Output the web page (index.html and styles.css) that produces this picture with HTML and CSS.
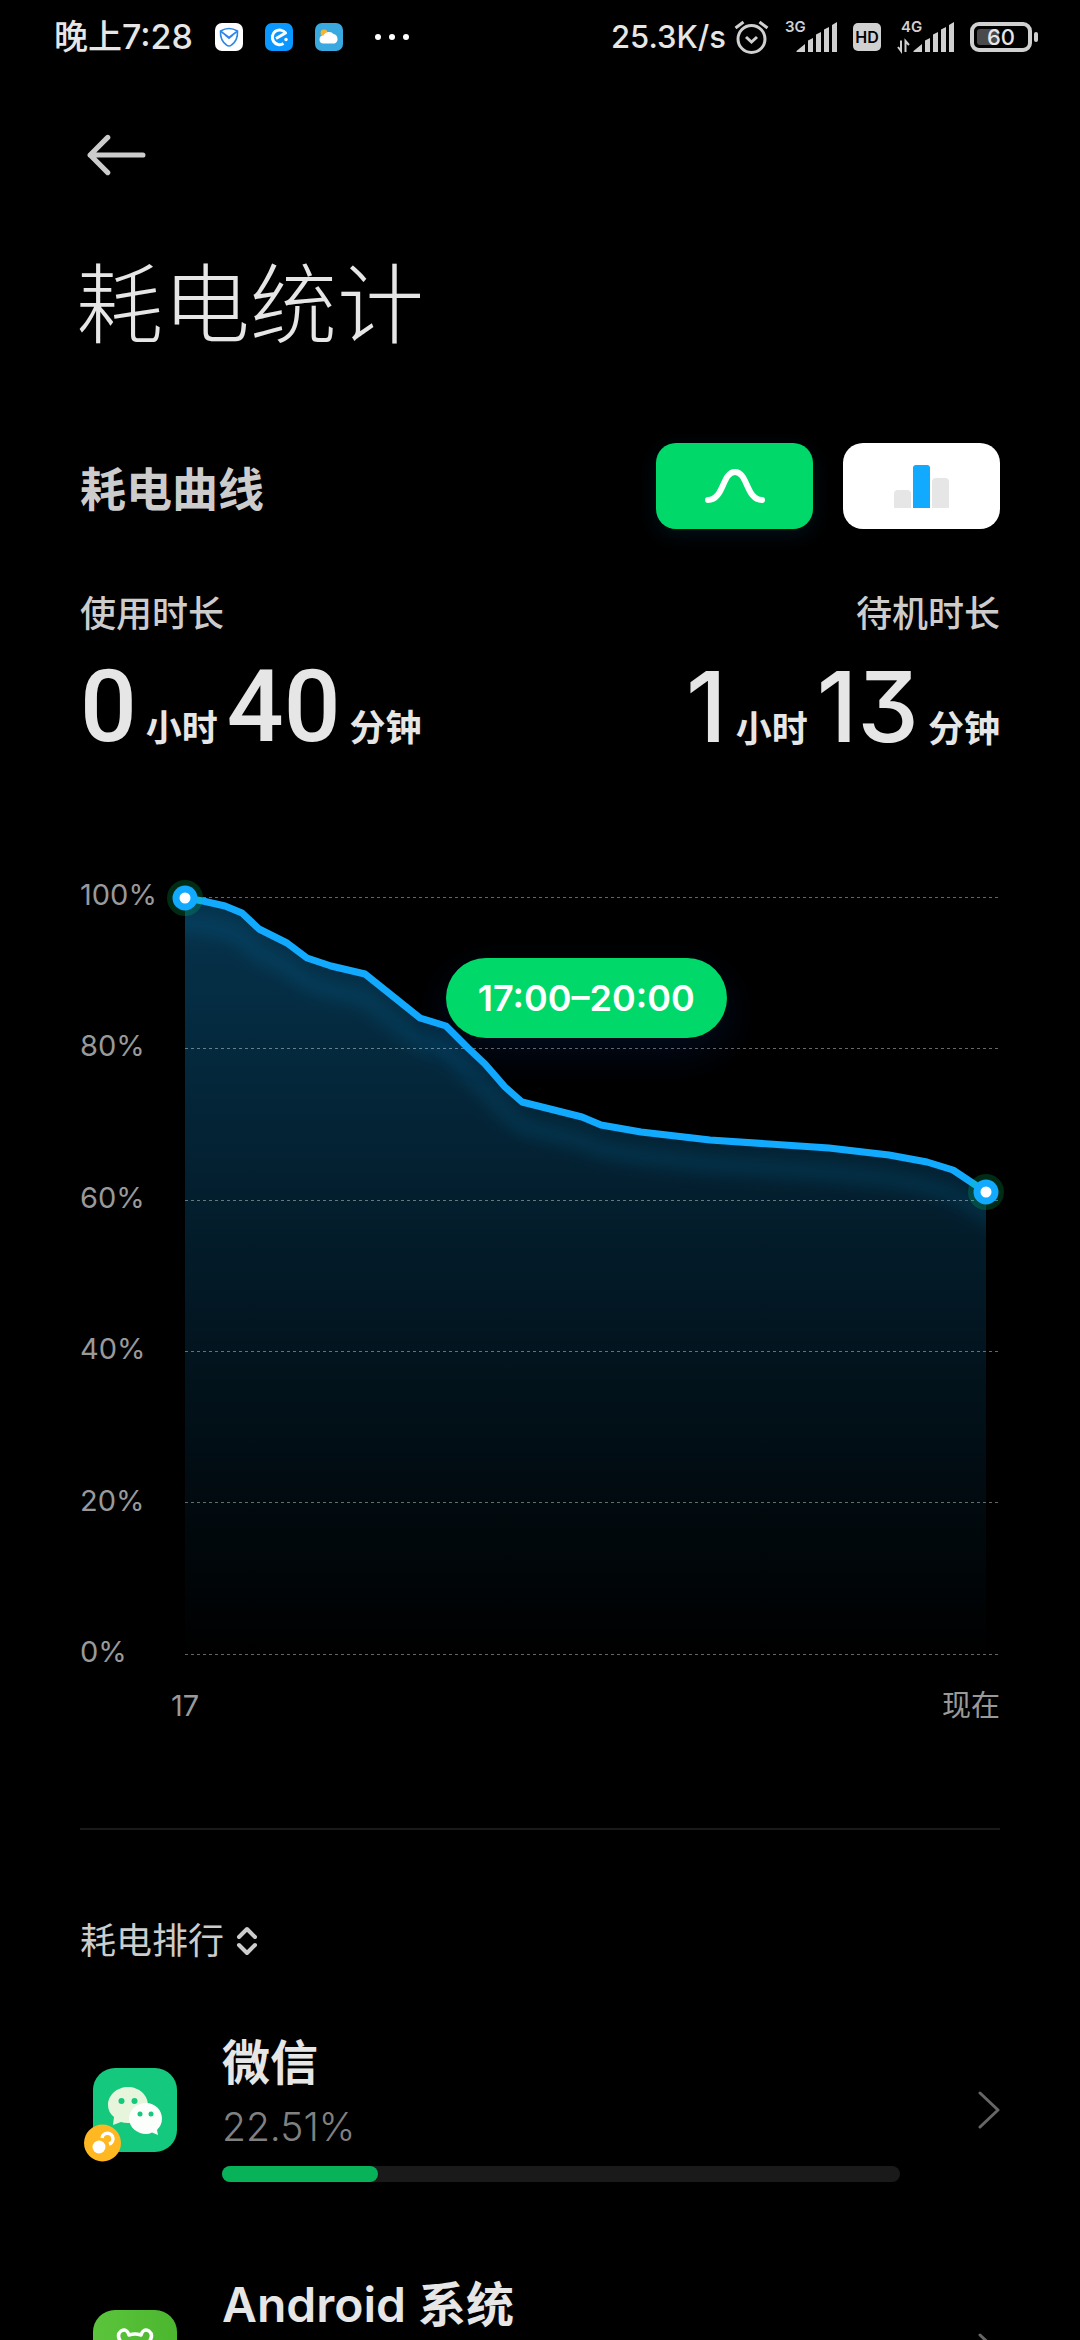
FILE: index.html
```html
<!DOCTYPE html>
<html lang="zh-CN">
<head>
    <meta charset="UTF-8">
    <meta name="viewport" content="width=device-width, initial-scale=1.0">
    <title>耗电统计</title>
    <link rel="stylesheet" href="styles.css">
</head>
<body>

<div class="statusBar">
    <div class="statusLeft">
        <span class="clock">晚上7:28</span>
        <svg class="appIcon" viewBox="0 0 28 28">
            <rect width="28" height="28" rx="7" fill="#fff"/>
            <path d="M5.500 8Q14 3 22.500 8Q23 17.500 16.500 22Q14 24 11.500 22Q5 17.500 5.500 8Z" fill="none" stroke="#2f86e8" stroke-width="1.600" stroke-linejoin="round"/>
            <path d="M6 8.500L14 14.500L22 8.500M10 11.800L14 15.200L18 11.800" fill="none" stroke="#2f86e8" stroke-width="1.600"/>
        </svg>
        <svg class="appIcon" viewBox="0 0 28 28">
            <rect width="28" height="28" rx="7" fill="#0a97ff"/>
            <path d="M11 15.500L20.500 10A7.300 7.300 0 1 0 18.500 20.500" fill="none" stroke="#fff" stroke-width="3" stroke-linejoin="round"/>
            <circle cx="21" cy="16.500" r="1.700" fill="#fff"/>
        </svg>
        <svg class="appIcon" viewBox="0 0 28 28">
            <rect width="28" height="28" rx="7" fill="#39a9e0"/>
            <circle cx="9" cy="10" r="3.400" fill="#f7b62c"/>
            <path d="M8.500 20.500A4 4 0 0 1 8.500 12.500A6 6 0 0 1 18.500 11A5 5 0 0 1 19.500 20.500Z" fill="#fff"/>
        </svg>
        <svg class="moreDots" viewBox="0 0 34 6">
            <circle cx="3" cy="3" r="3"/>
            <circle cx="17" cy="3" r="3"/>
            <circle cx="31" cy="3" r="3"/>
        </svg>
    </div>
    <div class="statusRight">
        <span class="speed">25.3K/s</span>
        <svg class="alarm" viewBox="0 0 35 35">
            <g fill="none" stroke="#d0d0d0" stroke-width="3">
                <circle cx="17.500" cy="19" r="13.500"/>
                <path d="M1.500 8L9.500 2M25.500 2L33.500 8"/>
                <path d="M12 17L17.500 22L23 17"/>
            </g>
        </svg>
        <svg class="signal" viewBox="0 0 52 32">
            <text x="0" y="11">3G</text>
            <path d="M11.500 31V30L20 23V31ZM23 31V19.500L28 17V31ZM31 31V13.500L36 11V31ZM39 31V8.500L44 6V31ZM47 31V4L52 1V31Z"/>
        </svg>
        <svg class="hd" viewBox="0 0 28 28">
            <rect width="28" height="28" rx="5" fill="#d0d0d0"/>
            <text x="14" y="20" text-anchor="middle">HD</text>
        </svg>
        <svg class="signal signalWide" viewBox="0 0 57 32">
            <text x="4" y="11">4G</text>
            <path d="M16.500 31V30L25 23V31ZM28 31V19.500L33 17V31ZM36 31V13.500L41 11V31ZM44 31V8.500L49 6V31ZM52 31V4L57 1V31Z"/>
            <path d="M1 26L4 30V19.500M8.500 31V20L12 24" fill="none" stroke="#d0d0d0" stroke-width="2"/>
        </svg>
        <svg class="battery" viewBox="0 0 68 30">
            <rect x="7" y="7" width="22" height="16" rx="3" fill="#4a4a4a"/>
            <rect x="2" y="2" width="58" height="26" rx="7" fill="none" stroke="#d0d0d0" stroke-width="4"/>
            <rect x="64" y="10" width="4" height="10" rx="2" fill="#d0d0d0"/>
            <text x="31" y="23" text-anchor="middle">60</text>
        </svg>
    </div>
</div>

<main class="page">
    <button class="backBtn" aria-label="返回">
        <svg viewBox="0 0 58 40">
            <path d="M21 3L4 20L21 37M4 20H55" fill="none" stroke="#ccc" stroke-width="5" stroke-linecap="round" stroke-linejoin="round"/>
        </svg>
    </button>
    <h1 class="title">耗电统计</h1>

    <div class="curveHeader">
        <h2 class="curveTitle">耗电曲线</h2>
        <div class="toggles">
            <button class="toggle toggleActive" aria-label="曲线">
                <svg viewBox="0 0 60 44">
                    <path d="M3 36C19 36 17 8 30 8S41 36 57 36" fill="none" stroke="#fff" stroke-width="6" stroke-linecap="round"/>
                </svg>
            </button>
            <button class="toggle" aria-label="柱状图">
                <svg viewBox="0 0 60 44">
                    <path d="M2 44V30Q2 26 6 26H15Q19 26 19 30V44ZM40 44V18Q40 14 44 14H53Q57 14 57 18V44Z" fill="#e6e6e6"/>
                    <path d="M21 44V4Q21 1 24 1H35Q38 1 38 4V44Z" fill="#12aaff"/>
                </svg>
            </button>
        </div>
    </div>

    <div class="durations">
        <div class="duration">
            <div class="durationLabel">使用时长</div>
            <div class="durationValue"><b>0</b><span>小时</span><b>40</b><span>分钟</span></div>
        </div>
        <div class="duration durationRight">
            <div class="durationLabel">待机时长</div>
            <div class="durationValue"><b>1</b><span>小时</span><b>13</b><span>分钟</span></div>
        </div>
    </div>

    <div class="chart">
        <div class="yAxis">
            <span>100%</span>
            <span>80%</span>
            <span>60%</span>
            <span>40%</span>
            <span>20%</span>
            <span>0%</span>
        </div>
        <div class="plot">
            <svg class="plotSvg" viewBox="0 0 815 757">
                <defs>
                    <linearGradient id="areaFill" x1="0" y1="0" x2="0" y2="1">
                        <stop offset="0" stop-color="#12aaff" stop-opacity="0.3"/>
                        <stop offset="1" stop-color="#12aaff" stop-opacity="0"/>
                    </linearGradient>
                    <filter id="soft" x="-10%" y="-30%" width="120%" height="160%">
                        <feGaussianBlur stdDeviation="8"/>
                    </filter>
                    <clipPath id="areaClip">
                        <path d="M0 1L18 4L40 9L57 16L74 32L102 46L122 61L146 69L180 77L200 93L235 121L261 129L283 151L300 167L320 190L337 205L397 220L416 228L456 235L525 243L644 251L704 258L742 265L768 273L801 295V757H0Z"/>
                    </clipPath>
                </defs>
                <path d="M0 1L18 4L40 9L57 16L74 32L102 46L122 61L146 69L180 77L200 93L235 121L261 129L283 151L300 167L320 190L337 205L397 220L416 228L456 235L525 243L644 251L704 258L742 265L768 273L801 295V757H0Z" fill="url(#areaFill)"/>
                <g clip-path="url(#areaClip)">
                    <path class="lineShadow" filter="url(#soft)" d="M-20 25L18 28L40 33L57 40L74 56L102 70L122 85L146 93L180 101L200 117L235 145L261 153L283 175L300 191L320 214L337 229L397 244L416 252L456 259L525 267L644 275L704 282L742 289L768 297L821 329"/>
                </g>
                <path class="gridLines" d="M0 0.500H815M0 151.500H815M0 303.500H815M0 454.500H815M0 605.500H815M0 757.500H815"/>
                <path class="line" d="M0 1L18 4L40 9L57 16L74 32L102 46L122 61L146 69L180 77L200 93L235 121L261 129L283 151L300 167L320 190L337 205L397 220L416 228L456 235L525 243L644 251L704 258L742 265L768 273L801 295"/>
                <circle cx="0" cy="1" r="18" fill="#00d96a" fill-opacity="0.2"/>
                <circle cx="0" cy="1" r="12.500" fill="#12aaff"/>
                <circle cx="0" cy="1" r="5.500" fill="#fff"/>
                <circle cx="801" cy="295" r="18" fill="#00d96a" fill-opacity="0.2"/>
                <circle cx="801" cy="295" r="12.500" fill="#12aaff"/>
                <circle cx="801" cy="295" r="5.500" fill="#fff"/>
            </svg>
            <div class="tooltip">17:00–20:00</div>
        </div>
    </div>
    <div class="xAxis">
        <span>17</span>
        <span>现在</span>
    </div>

    <button class="sortBtn">
        耗电排行
        <svg viewBox="0 0 22 30">
            <path d="M3 11L11 3L19 11M3 19L11 27L19 19" fill="none" stroke="#ccc" stroke-width="4" stroke-linecap="round" stroke-linejoin="round"/>
        </svg>
    </button>

    <div class="appList">
        <a class="appRow" href="#wechat">
            <svg class="rowIcon" viewBox="0 0 104 104">
                <rect x="13" y="10" width="84" height="84" rx="22" fill="#14c87e"/>
                <path d="M48 29C37 29 28 37 28 47C28 52 30 56 34 59L33 67L41 64Q44 65 48 65C59 65 68 57 68 47S59 29 48 29Z" fill="#e6f5dc"/>
                <circle cx="41.500" cy="43" r="3" fill="#14c87e"/>
                <circle cx="54.500" cy="43" r="3" fill="#14c87e"/>
                <path d="M66 45C57 45 49 52 49 60.500S57 76 66 76Q69 76 72 74.500L78 77L77 72Q82 67 82 60.500C82 52 75 45 66 45Z" fill="#fbfefa"/>
                <circle cx="60" cy="56" r="2.500" fill="#14c87e"/>
                <circle cx="71" cy="56" r="2.500" fill="#14c87e"/>
                <circle cx="22.500" cy="85" r="18.500" fill="#ffb821"/>
                <circle cx="19" cy="89" r="6.500" fill="#fff"/>
                <path d="M22 80A5.500 5.500 0 1 1 29 86" fill="none" stroke="#fff" stroke-width="3.500"/>
            </svg>
            <div class="rowBody">
                <div class="appName">微信</div>
                <div class="appPercent">22.51%</div>
                <div class="bar"><div class="barFill" style="width: 23%"></div></div>
            </div>
            <svg class="chevron" viewBox="0 0 22 38">
                <path d="M2 2L20 19L2 36" fill="none" stroke="#666" stroke-width="3" stroke-linecap="round" stroke-linejoin="round"/>
            </svg>
        </a>
        <a class="appRow" href="#android">
            <svg class="rowIcon" viewBox="0 0 104 104">
                <defs>
                    <linearGradient id="androidFill" x1="0" y1="0" x2="1" y2="0">
                        <stop offset="0" stop-color="#5bc43c"/>
                        <stop offset="1" stop-color="#4bb72e"/>
                    </linearGradient>
                </defs>
                <rect x="13" y="10" width="84" height="84" rx="22" fill="url(#androidFill)"/>
                <path d="M35 60Q35 49 41 42Q36 35 41 31Q47 28 49 35Q55 33 61 35Q63 28 69 31Q74 35 69 42Q75 49 75 60Z" fill="none" stroke="#fff" stroke-width="3.500" stroke-linejoin="round"/>
            </svg>
            <div class="rowBody">
                <div class="appName">Android 系统</div>
            </div>
            <svg class="chevron" viewBox="0 0 22 38">
                <path d="M2 2L20 19L2 36" fill="none" stroke="#666" stroke-width="3" stroke-linecap="round" stroke-linejoin="round"/>
            </svg>
        </a>
    </div>
</main>

</body>
</html>
```
FILE: styles.css
```css
body {
    margin: 0;
    height: 100vh;
    overflow: hidden;
    background-color: #000;
    color: #e6e6e6;
    font-family: Inter, "Noto Sans CJK SC", sans-serif;
}
button {
    padding: 0;
    border: none;
    background: none;
    color: inherit;
    font-family: inherit;
    cursor: pointer;
}
svg {
    display: block;
    flex-shrink: 0;
}
.statusBar {
    display: flex;
    justify-content: space-between;
    align-items: center;
    height: 74px;
    padding: 0 42px 0 54px;
}
.statusLeft, .statusRight {
    display: flex;
    align-items: center;
}
.statusLeft {
    gap: 22px;
}
.statusRight {
    gap: 16px;
}
.clock, .speed {
    font-size: 34px;
    line-height: 40px;
    font-weight: 500;
}
.speed {
    margin-right: -8px;
    font-size: 31px;
}
.appIcon, .hd {
    width: 28px;
    height: 28px;
}
.moreDots {
    width: 34px;
    height: 6px;
    margin-left: 10px;
    fill: #fff;
}
.alarm {
    width: 35px;
    height: 35px;
}
.signal {
    width: 52px;
    height: 32px;
    fill: #d0d0d0;
    font-size: 15px;
    font-weight: 600;
    overflow: visible;
}
.signalWide {
    width: 57px;
}
.hd {
    font-size: 16px;
    font-weight: 600;
}
.battery {
    width: 68px;
    height: 30px;
    fill: #e6e6e6;
    font-size: 22px;
    font-weight: 500;
}

.page {
    padding: 60px 80px 0;
}
.backBtn {
    display: block;
    margin-left: 6px;
}
.backBtn svg {
    width: 60px;
    height: 42px;
}
.title {
    margin: 80px 0 0 -4px;
    font-size: 87px;
    line-height: 100px;
    font-weight: 200;
}

/* curve / bar switch */
.curveHeader {
    display: flex;
    justify-content: space-between;
    align-items: center;
    margin-top: 87px;
}
.curveTitle {
    margin: 0;
    padding-top: 6px;
    color: #ccc;
    font-size: 46px;
    line-height: 60px;
    font-weight: 700;
}
.toggles {
    display: flex;
    gap: 30px;
}
.toggle {
    display: flex;
    align-items: center;
    justify-content: center;
    width: 157px;
    height: 86px;
    border-radius: 20px;
    background-color: #fff;
}
.toggle svg {
    width: 60px;
    height: 44px;
}
.toggleActive {
    background-color: #00d96a;
    box-shadow: 0 6px 20px rgba(18, 170, 255, 0.1);
}

.durations {
    display: flex;
    justify-content: space-between;
    margin-top: 60px;
}
.durationRight {
    text-align: right;
}
.durationLabel {
    color: #ccc;
    font-size: 36px;
    line-height: 50px;
    font-weight: 500;
}
.durationValue {
    display: flex;
    align-items: baseline;
    gap: 9px;
    margin-top: 8px;
    line-height: 120px;
    font-size: 36px;
    font-weight: 600;
}
.durationValue b {
    font-family: Roboto, sans-serif;
    font-size: 100px;
    font-weight: 500;
}
.durationRight b {
    font-family: Inter, sans-serif;
    font-size: 98px;
    font-feature-settings: "cv09";
}

/* battery level chart */
.chart {
    display: flex;
    margin-top: 108px;
}
.yAxis {
    display: flex;
    flex-direction: column;
    justify-content: space-between;
    width: 105px;
    margin: -18px 0 -14px;
}
.yAxis, .xAxis {
    color: #999;
    font-size: 29px;
    line-height: 32px;
    font-weight: 400;
}
.plot {
    flex: 1;
    position: relative;
}
.plotSvg {
    width: 100%;
    overflow: visible;
}
.gridLines {
    stroke: #fff;
    stroke-opacity: 0.4;
    stroke-width: 1;
    stroke-dasharray: 3 3;
}
.line {
    fill: none;
    stroke: #12aaff;
    stroke-width: 7;
    stroke-linejoin: round;
}
.lineShadow {
    fill: none;
    stroke: #12aaff;
    stroke-opacity: 0.12;
    stroke-width: 16;
}
.tooltip {
    position: absolute;
    left: 32%;
    top: 8%;
    padding: 0 32px;
    border-radius: 40px;
    background-color: #00d96a;
    box-shadow: 0 14px 40px rgba(18, 100, 255, 0.12);
    color: #fff;
    font-size: 36px;
    line-height: 80px;
    font-weight: 600;
}
.xAxis {
    display: flex;
    justify-content: space-between;
    margin-top: 36px;
    padding: 0 0 106px 91px;
    border-bottom: 2px solid #1a1a1a;
}

/* ranking */
.sortBtn {
    display: flex;
    align-items: center;
    gap: 12px;
    margin-top: 86px;
    color: #ccc;
    font-size: 36px;
    line-height: 50px;
}
.sortBtn svg {
    width: 22px;
    height: 30px;
}
.appList {
    display: flex;
    flex-direction: column;
    gap: 98px;
    margin-top: 72px;
}
.appRow {
    display: flex;
    align-items: center;
    min-height: 144px;
    color: inherit;
    text-decoration: none;
}
.rowIcon {
    width: 104px;
    height: 104px;
    margin-right: 38px;
}
.rowBody {
    flex: 1;
    align-self: flex-start;
    display: flex;
    flex-direction: column;
    gap: 14px;
    margin-right: 78px;
}
.appName {
    font-size: 48px;
    line-height: 50px;
    font-weight: 600;
}
.appPercent {
    color: #808080;
    font-size: 39px;
    line-height: 50px;
    font-weight: 300;
}
.bar {
    height: 16px;
    border-radius: 8px;
    background-color: #1a1a1a;
}
.barFill {
    height: 16px;
    border-radius: 8px;
    background-color: #07b259;
}
.chevron {
    width: 22px;
    height: 38px;
}
```
